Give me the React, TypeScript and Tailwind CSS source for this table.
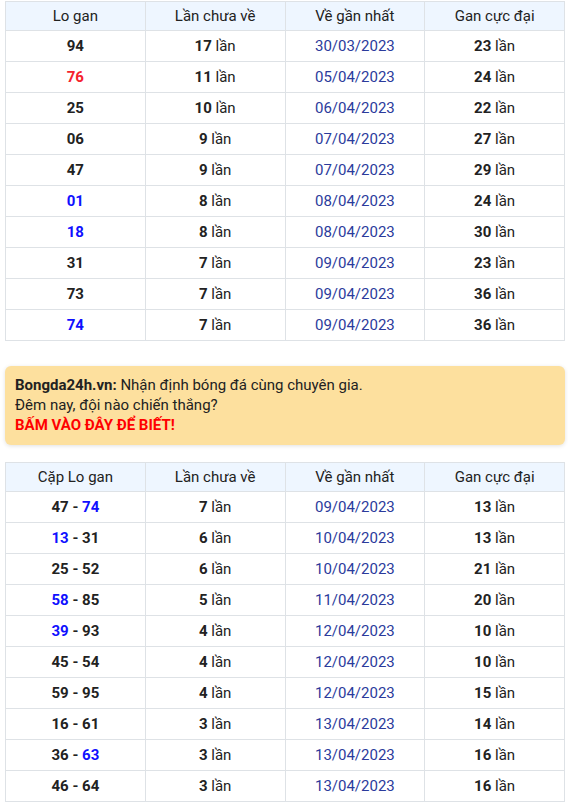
import React from "react";

type Part = { t: string; c?: "red" | "blue" };
type Row = { lo: Part[]; lan: string; date: string; max: string };

const table1: Row[] = [
  { lo: [{ t: "94" }], lan: "17", date: "30/03/2023", max: "23" },
  { lo: [{ t: "76", c: "red" }], lan: "11", date: "05/04/2023", max: "24" },
  { lo: [{ t: "25" }], lan: "10", date: "06/04/2023", max: "22" },
  { lo: [{ t: "06" }], lan: "9", date: "07/04/2023", max: "27" },
  { lo: [{ t: "47" }], lan: "9", date: "07/04/2023", max: "29" },
  { lo: [{ t: "01", c: "blue" }], lan: "8", date: "08/04/2023", max: "24" },
  { lo: [{ t: "18", c: "blue" }], lan: "8", date: "08/04/2023", max: "30" },
  { lo: [{ t: "31" }], lan: "7", date: "09/04/2023", max: "23" },
  { lo: [{ t: "73" }], lan: "7", date: "09/04/2023", max: "36" },
  { lo: [{ t: "74", c: "blue" }], lan: "7", date: "09/04/2023", max: "36" },
];

const table2: Row[] = [
  { lo: [{ t: "47 - " }, { t: "74", c: "blue" }], lan: "7", date: "09/04/2023", max: "13" },
  { lo: [{ t: "13", c: "blue" }, { t: " - 31" }], lan: "6", date: "10/04/2023", max: "13" },
  { lo: [{ t: "25 - 52" }], lan: "6", date: "10/04/2023", max: "21" },
  { lo: [{ t: "58", c: "blue" }, { t: " - 85" }], lan: "5", date: "11/04/2023", max: "20" },
  { lo: [{ t: "39", c: "blue" }, { t: " - 93" }], lan: "4", date: "12/04/2023", max: "10" },
  { lo: [{ t: "45 - 54" }], lan: "4", date: "12/04/2023", max: "10" },
  { lo: [{ t: "59 - 95" }], lan: "4", date: "12/04/2023", max: "15" },
  { lo: [{ t: "16 - 61" }], lan: "3", date: "13/04/2023", max: "14" },
  { lo: [{ t: "36 - " }, { t: "63", c: "blue" }], lan: "3", date: "13/04/2023", max: "16" },
  { lo: [{ t: "46 - 64" }], lan: "3", date: "13/04/2023", max: "16" },
];

const GanTable = ({ first, rows }: { first: string; rows: Row[] }) => (
  <table className="w-[560px] border-collapse table-fixed text-[15px] text-[#222]">
    <thead>
      <tr className="bg-[#eef6ff]">
        {[first, "Lần chưa về", "Về gần nhất", "Gan cực đại"].map((h) => (
          <th key={h} className="h-[29px] border border-[#dee2e6] font-normal text-center p-0">
            {h}
          </th>
        ))}
      </tr>
    </thead>
    <tbody>
      {rows.map((r, i) => (
        <tr key={i}>
          <td className="h-[31px] border border-[#dee2e6] text-center font-bold p-0">
            {r.lo.map((p, j) => (
              <span
                key={j}
                className={p.c === "red" ? "text-[#f5222d]" : p.c === "blue" ? "text-[#1010ff]" : ""}
              >
                {p.t}
              </span>
            ))}
          </td>
          <td className="h-[31px] border border-[#dee2e6] text-center p-0">
            <b>{r.lan}</b> lần
          </td>
          <td className="h-[31px] border border-[#dee2e6] text-center p-0 text-[#2b3b9c]">{r.date}</td>
          <td className="h-[31px] border border-[#dee2e6] text-center p-0">
            <b>{r.max}</b> lần
          </td>
        </tr>
      ))}
    </tbody>
  </table>
);

export default function App() {
  return (
    <div className="w-[568px] bg-white pt-[1px] pl-[5px] font-['Roboto',sans-serif]">
      <GanTable first="Lo gan" rows={table1} />

      <div className="mt-[25px] w-[560px] h-[79px] rounded-md bg-[#fde09e] shadow-[0_1px_4px_rgba(0,0,0,0.12)] px-[10px] pt-[9px] text-[15px] leading-[20px] text-[#222]">
        <p>
          <b>Bongda24h.vn:</b> Nhận định bóng đá cùng chuyên gia.
        </p>
        <p>Đêm nay, đội nào chiến thắng?</p>
        <p className="font-bold text-[#ff0000]">BẤM VÀO ĐÂY ĐỂ BIẾT!</p>
      </div>

      <div className="mt-[17px]">
        <GanTable first="Cặp Lo gan" rows={table2} />
      </div>
    </div>
  );
}
